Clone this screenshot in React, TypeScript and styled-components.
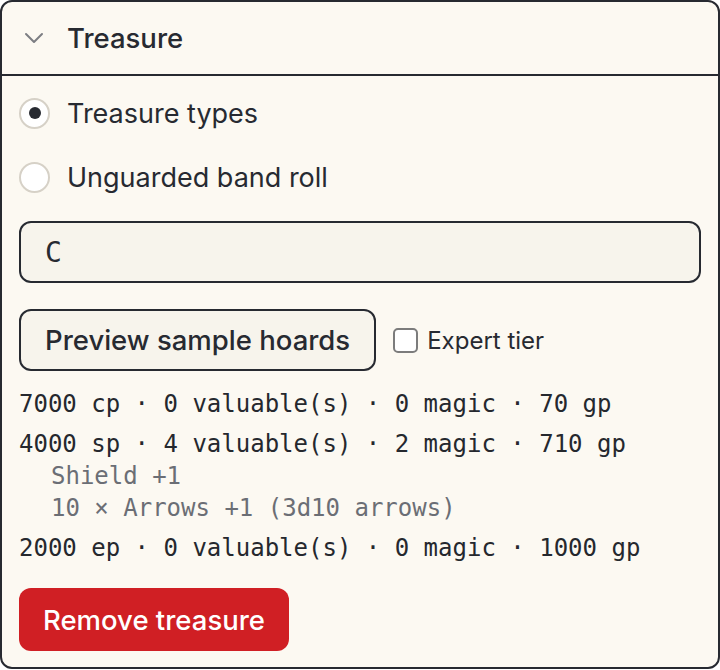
import { useState } from 'react';
import styled, { createGlobalStyle } from 'styled-components';

type Hoard = {
  coins: string;
  valuables: number;
  magic: number;
  gp: number;
  items: string[];
};

const hoards: Hoard[] = [
  { coins: '7000 cp', valuables: 0, magic: 0, gp: 70, items: [] },
  { coins: '4000 sp', valuables: 4, magic: 2, gp: 710, items: ['Shield +1', '10 × Arrows +1 (3d10 arrows)'] },
  { coins: '2000 ep', valuables: 0, magic: 0, gp: 1000, items: [] },
];

const Chevron = () => (
  <svg width="24" height="24" viewBox="0 0 24 24" fill="none" stroke="#7c7e83" strokeWidth="2" strokeLinecap="round" strokeLinejoin="round">
    <path d="M4 8l8 8 8-8" />
  </svg>
);

const App = () => {
  const [mode, setMode] = useState<'types' | 'band'>('types');
  const [code, setCode] = useState('C');
  const [expert, setExpert] = useState(false);

  return (
    <>
      <GlobalStyle />
      <SCard>
        <SHeader>
          <Chevron />
          <STitle>Treasure</STitle>
        </SHeader>
        <SBody>
          <SRadioGroup>
            <SRadioRow>
              <SRadio type="radio" name="mode" checked={mode === 'types'} onChange={() => setMode('types')} />
              Treasure types
            </SRadioRow>
            <SRadioRow>
              <SRadio type="radio" name="mode" checked={mode === 'band'} onChange={() => setMode('band')} />
              Unguarded band roll
            </SRadioRow>
          </SRadioGroup>

          <SInput value={code} onChange={e => setCode(e.target.value)} />

          <SActions>
            <SButton>Preview sample hoards</SButton>
            <SCheckLabel>
              <SCheckbox type="checkbox" checked={expert} onChange={e => setExpert(e.target.checked)} />
              Expert tier
            </SCheckLabel>
          </SActions>

          <SResults>
            {hoards.map(h => (
              <SEntry key={h.coins}>
                <SLine>
                  {h.coins} · {h.valuables} valuable(s) · {h.magic} magic · {h.gp} gp
                </SLine>
                {h.items.map(item => (
                  <SItem key={item}>{item}</SItem>
                ))}
              </SEntry>
            ))}
          </SResults>

          <SRemove>Remove treasure</SRemove>
        </SBody>
      </SCard>
    </>
  );
};

const GlobalStyle = createGlobalStyle`
  body {
    margin: 0;
    background: #ffffff;
    font-family: Inter, "Noto Sans", sans-serif;
    color: #272a31;
  }
`;

const SCard = styled.section`
  box-sizing: border-box;
  width: 720px;
  border: 2px solid #272a31;
  border-radius: 12px;
  background: #fcf9f2;
  overflow: hidden;
`;

const SHeader = styled.div`
  display: flex;
  align-items: center;
  gap: 21px;
  height: 72px;
  padding: 0 20px;
  border-bottom: 2px solid #272a31;
`;

const STitle = styled.h2`
  margin: 0;
  font-size: 27.5px;
  font-weight: 500;
`;

const SBody = styled.div`
  display: flex;
  flex-direction: column;
  align-items: flex-start;
  padding: 13px 17px 16px;
`;

const SRadioGroup = styled.div`
  display: flex;
  flex-direction: column;
  gap: 16px;
`;

const SRadioRow = styled.label`
  display: flex;
  align-items: center;
  gap: 17px;
  height: 48px;
  font-size: 27px;
`;

const SRadio = styled.input`
  appearance: none;
  box-sizing: border-box;
  width: 31px;
  height: 31px;
  margin: 0;
  border: 2px solid #d6d1c7;
  border-radius: 50%;
  background: #ffffff;
  display: grid;
  place-items: center;

  &:checked::after {
    content: '';
    width: 12px;
    height: 12px;
    border-radius: 50%;
    background: #272a31;
  }
`;

const SInput = styled.input`
  box-sizing: border-box;
  width: 100%;
  height: 62px;
  margin-top: 20px;
  padding: 0 24px;
  border: 2px solid #272a31;
  border-radius: 12px;
  background: #f7f4ec;
  font-family: "DejaVu Sans Mono", monospace;
  font-size: 28px;
  color: #272a31;
  outline: none;
`;

const SActions = styled.div`
  display: flex;
  align-items: center;
  gap: 17px;
  margin-top: 26px;
`;

const SButton = styled.button`
  box-sizing: border-box;
  height: 62px;
  padding: 0 24px;
  border: 2px solid #272a31;
  border-radius: 12px;
  background: #f7f4ec;
  font-family: Inter, "Noto Sans", sans-serif;
  font-size: 27.5px;
  font-weight: 500;
  color: #272a31;
`;

const SCheckLabel = styled.label`
  display: flex;
  align-items: center;
  gap: 9px;
  font-size: 24px;
`;

const SCheckbox = styled.input`
  appearance: none;
  box-sizing: border-box;
  width: 25px;
  height: 25px;
  margin: 0;
  border: 2px solid #7c7c7c;
  border-radius: 5px;
  background: #ffffff;
`;

const SResults = styled.div`
  display: flex;
  flex-direction: column;
  gap: 8px;
  margin-top: 17px;
  font-family: "DejaVu Sans Mono", monospace;
  font-size: 24px;
  line-height: 32px;
`;

const SEntry = styled.div`
  display: flex;
  flex-direction: column;
`;

const SLine = styled.div`
  color: #25282e;
`;

const SItem = styled.div`
  padding-left: 32px;
  color: #6b6e75;
`;

const SRemove = styled.button`
  height: 63px;
  margin-top: 24px;
  padding: 0 24px;
  border: none;
  border-radius: 12px;
  background: #d01f24;
  font-family: Inter, "Noto Sans", sans-serif;
  font-size: 27.5px;
  font-weight: 500;
  color: #ffffff;
`;

export default App;
